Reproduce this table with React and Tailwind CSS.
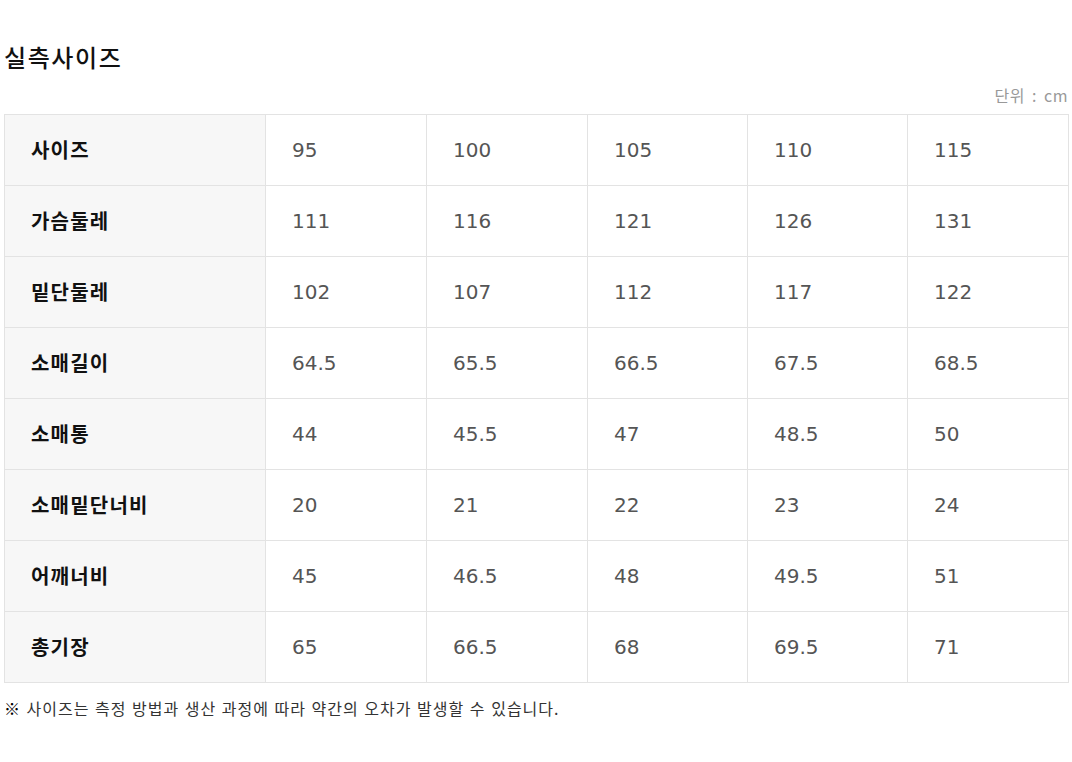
const ROWS = [
  ["사이즈", "95", "100", "105", "110", "115"],
  ["가슴둘레", "111", "116", "121", "126", "131"],
  ["밑단둘레", "102", "107", "112", "117", "122"],
  ["소매길이", "64.5", "65.5", "66.5", "67.5", "68.5"],
  ["소매통", "44", "45.5", "47", "48.5", "50"],
  ["소매밑단너비", "20", "21", "22", "23", "24"],
  ["어깨너비", "45", "46.5", "48", "49.5", "51"],
  ["총기장", "65", "66.5", "68", "69.5", "71"],
];

const KR = { fontFamily: '"Noto Sans CJK KR", "DejaVu Sans", sans-serif' };
const NUM = { fontFamily: '"DejaVu Sans", "Noto Sans CJK KR", sans-serif' };

export default function App() {
  return (
    <div className="w-[1072px] h-[762px] bg-white" style={KR}>
      <div className="pt-[40px] pl-[4px] pr-[4px]">
        <h1 className="text-[24px] leading-[34px] font-medium tracking-[1.6px] text-[#111]">실측사이즈</h1>
        <div className="mt-[13px] text-right text-[16px] leading-[16px] tracking-[0.5px] [word-spacing:3px] text-[#999]">단위 : cm</div>
        <table className="mt-[11px] w-[1064px] border-collapse table-fixed">
          <colgroup>
            <col className="w-[261px]" />
            <col className="w-[161px]" />
            <col className="w-[161px]" />
            <col className="w-[160px]" />
            <col className="w-[160px]" />
            <col className="w-[161px]" />
          </colgroup>
          <tbody>
            {ROWS.map((row) => (
              <tr key={row[0]} className="h-[71px]">
                {row.map((cell, i) =>
                  i === 0 ? (
                    <th
                      key={i}
                      className="border border-[#e3e3e3] bg-[#f7f7f7] pl-[26px] text-left text-[20px] font-bold tracking-[1.2px] text-[#111]"
                    >
                      {cell}
                    </th>
                  ) : (
                    <td
                      key={i}
                      className="border border-[#e3e3e3] pl-[26px] text-left text-[20px] text-[#555]"
                      style={NUM}
                    >
                      {cell}
                    </td>
                  )
                )}
              </tr>
            ))}
          </tbody>
        </table>
        <p className="mt-[14px] text-[16px] leading-[22px] tracking-[1px] [word-spacing:1px] text-[#333]">
          <span className="font-bold text-black">※</span> 사이즈는 측정 방법과 생산 과정에 따라 약간의 오차가 발생할 수 있습니다.
        </p>
      </div>
    </div>
  );
}
